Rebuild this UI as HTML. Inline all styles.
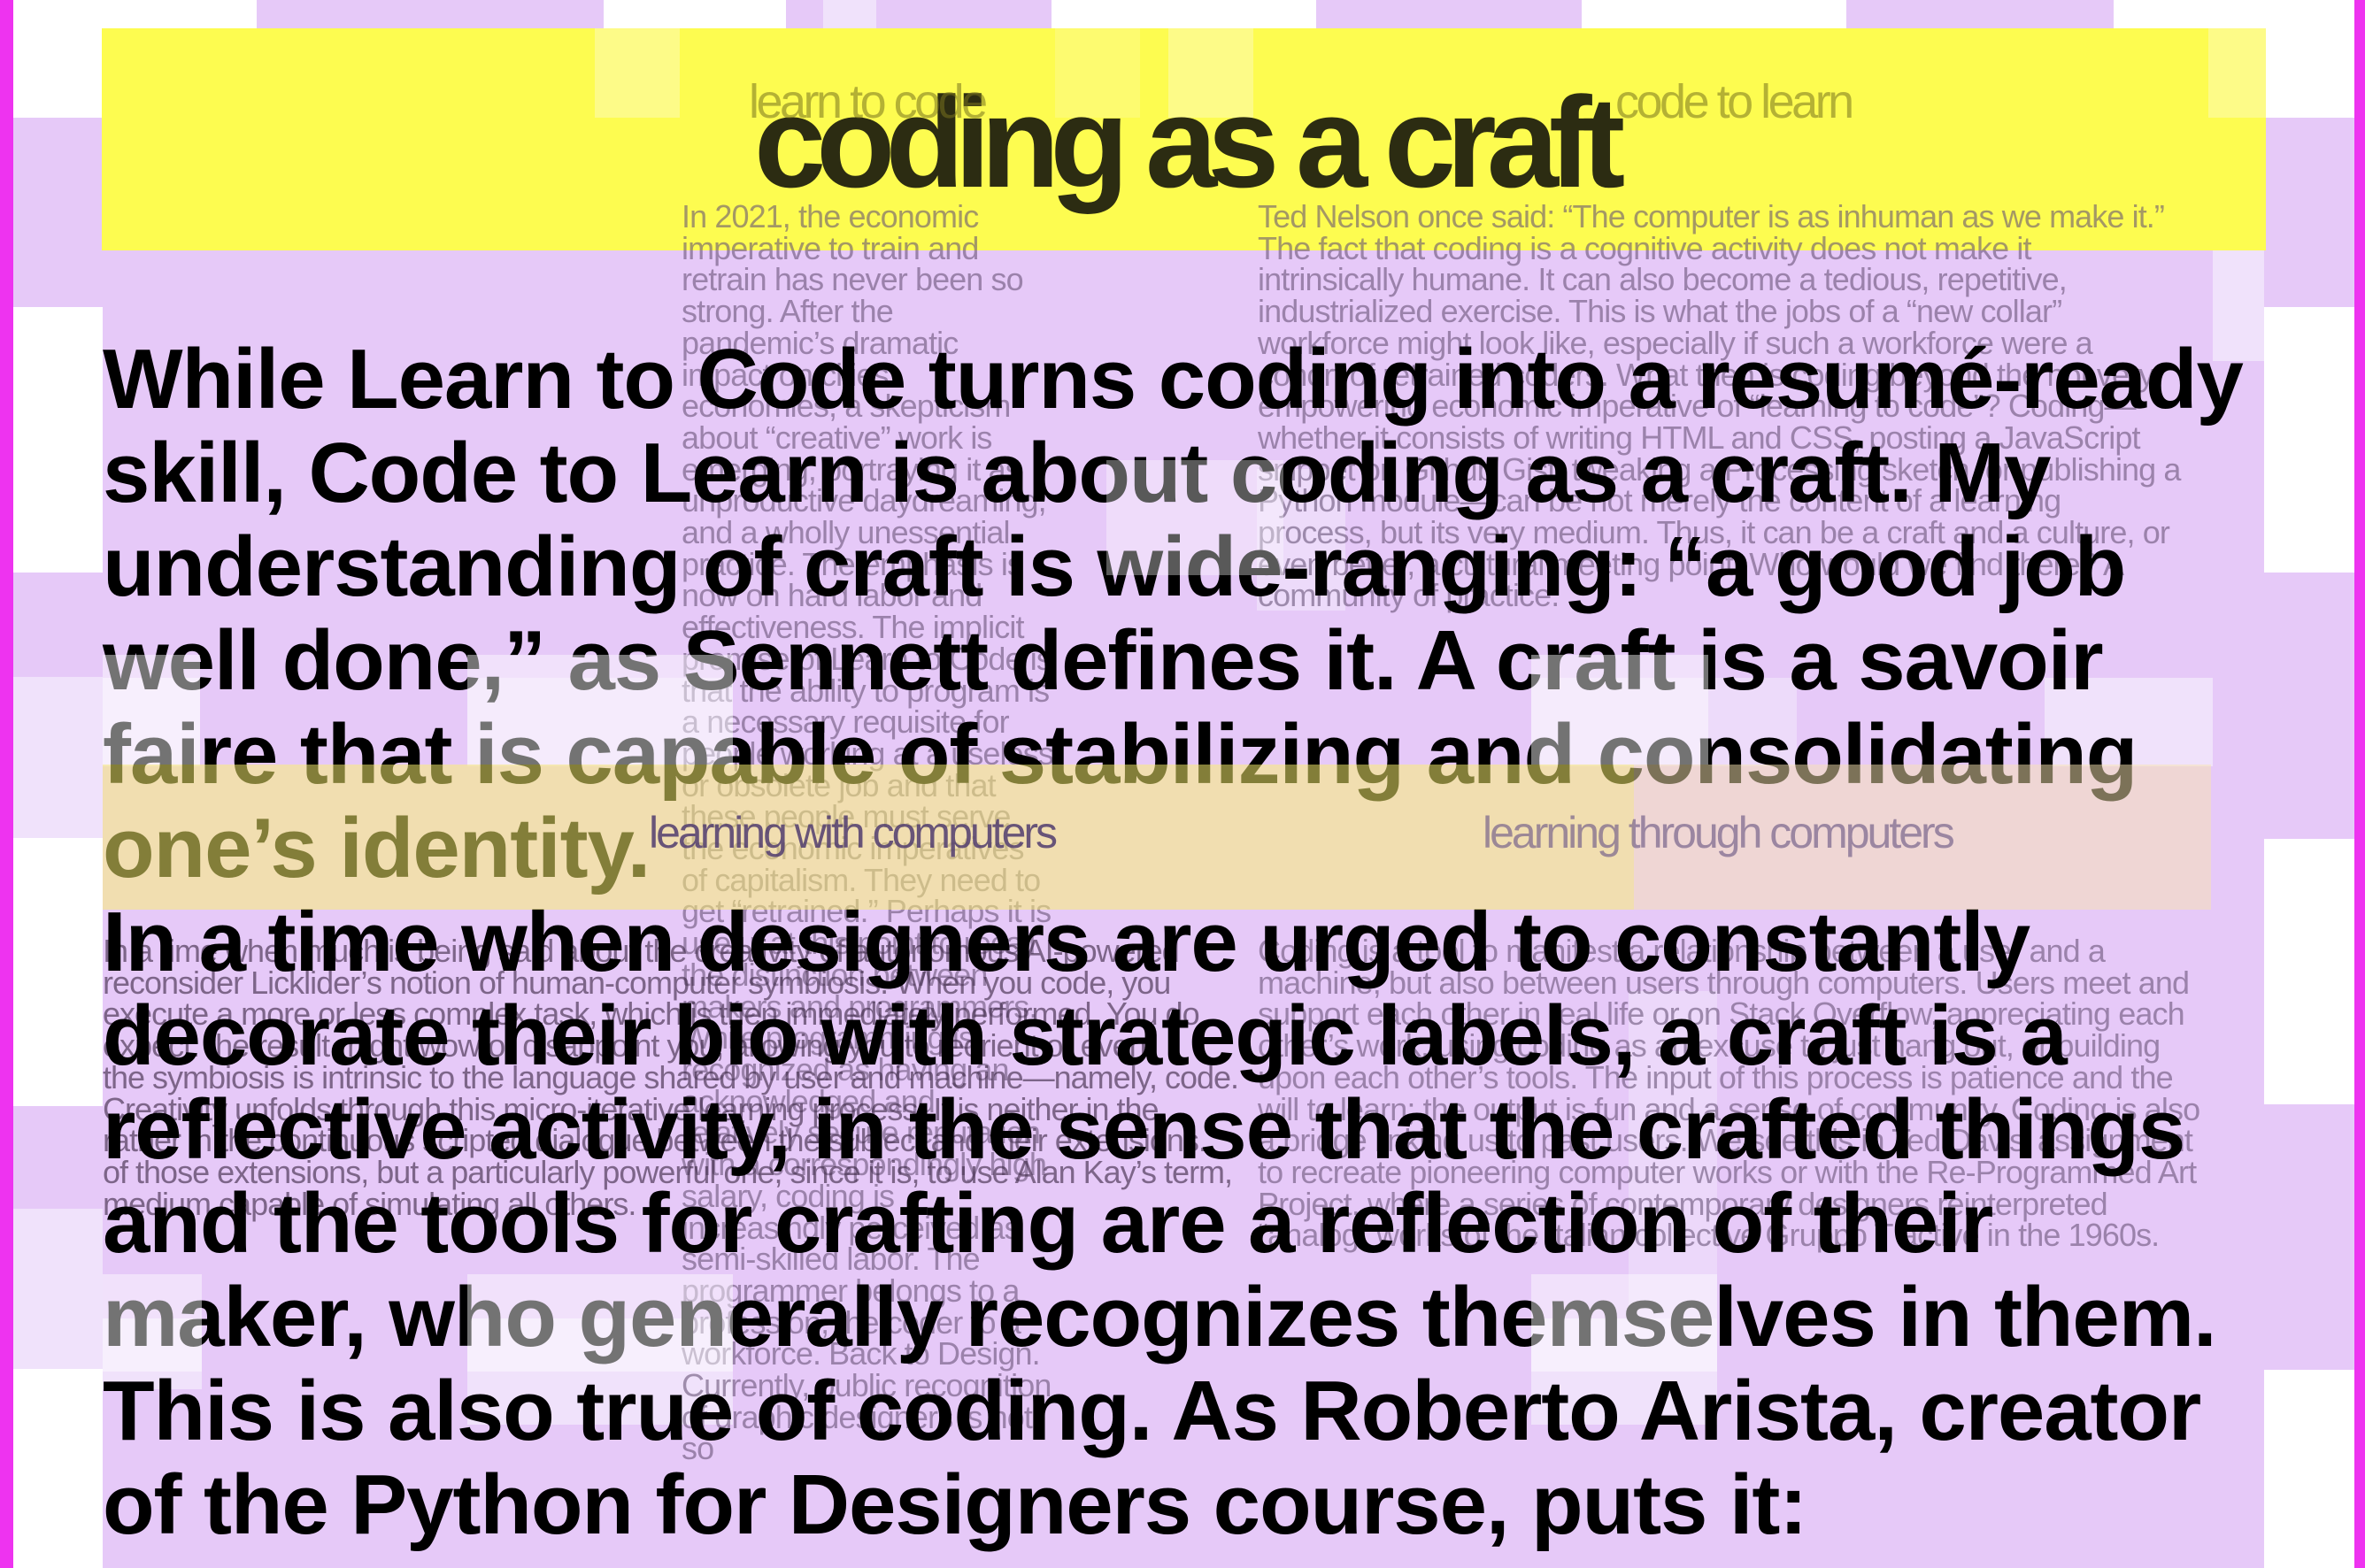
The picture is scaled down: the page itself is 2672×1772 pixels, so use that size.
<!DOCTYPE html>
<html><head><meta charset="utf-8">
<style>
*{margin:0;padding:0;box-sizing:border-box}
html,body{width:2672px;height:1772px;overflow:hidden;background:#fff}
body{position:relative;font-family:"Liberation Sans",Arial,sans-serif}
.r{position:absolute}
.p{background:#e6c9f8}
.l{background:#f0e2fb}
.main{position:absolute;left:116px;top:376px;font-weight:bold;font-size:96px;line-height:106px;color:#000;letter-spacing:-1.1px;white-space:nowrap;z-index:5}
.sm{position:absolute;font-size:36px;line-height:35.7px;color:rgba(100,80,115,.58);z-index:4;letter-spacing:-0.9px}
.smd{position:absolute;font-size:36px;line-height:35.7px;color:rgba(60,40,70,.62);z-index:4;letter-spacing:-1px;white-space:nowrap}
.lab{position:absolute;font-size:54px;letter-spacing:-3.5px;white-space:nowrap;z-index:7}
</style></head><body>
<div class="r" style="left:0;top:0;width:15px;height:1772px;background:#ee33f0;z-index:20"></div>
<div class="r" style="left:2660px;top:0;width:12px;height:1772px;background:#ee33f0;z-index:20"></div>
<div class="r p" style="left:116px;top:32px;width:2442px;height:1740px"></div>
<div class="r p" style="left:290px;top:0;width:392px;height:40px"></div>
<div class="r p" style="left:888px;top:0;width:300px;height:40px"></div>
<div class="r l" style="left:930px;top:0;width:60px;height:40px"></div>
<div class="r p" style="left:1487px;top:0;width:300px;height:40px"></div>
<div class="r p" style="left:2086px;top:0;width:302px;height:40px"></div>
<div class="r p" style="left:15px;top:133px;width:101px;height:214px"></div>
<div class="r p" style="left:15px;top:647px;width:101px;height:118px"></div>
<div class="r l" style="left:15px;top:765px;width:101px;height:182px"></div>
<div class="r p" style="left:15px;top:1250px;width:101px;height:116px"></div>
<div class="r l" style="left:15px;top:1366px;width:101px;height:181px"></div>
<div class="r p" style="left:2558px;top:133px;width:102px;height:214px"></div>
<div class="r p" style="left:2558px;top:647px;width:102px;height:301px"></div>
<div class="r p" style="left:2558px;top:1248px;width:102px;height:300px"></div>
<div class="r l" style="left:2500px;top:268px;width:58px;height:140px"></div>
<div class="r l" style="left:1420px;top:530px;width:100px;height:160px;opacity:.7"></div>
<div class="r l" style="left:116px;top:766px;width:110px;height:100px"></div>
<div class="r l" style="left:528px;top:766px;width:300px;height:100px;opacity:.7"></div>
<div class="r l" style="left:1730px;top:766px;width:300px;height:100px;opacity:.7"></div>
<div class="r l" style="left:2310px;top:766px;width:190px;height:100px"></div>
<div class="r l" style="left:116px;top:1490px;width:112px;height:80px"></div>
<div class="r l" style="left:528px;top:1490px;width:300px;height:120px"></div>
<div class="r l" style="left:1730px;top:1490px;width:210px;height:120px"></div>
<div class="r l" style="left:1840px;top:1120px;width:100px;height:370px;opacity:.6"></div>
<div class="r" style="left:115px;top:32px;width:2445px;height:251px;background:#fdfc50;z-index:1"></div>
<div class="r" style="left:672px;top:32px;width:96px;height:101px;background:#fdfb88;z-index:1"></div>
<div class="r" style="left:1192px;top:32px;width:96px;height:101px;background:#fdfb70;z-index:1"></div>
<div class="r" style="left:1320px;top:32px;width:96px;height:101px;background:#fdfb88;z-index:1"></div>
<div class="r" style="left:2495px;top:32px;width:65px;height:101px;background:#fdfb88;z-index:1"></div>
<div class="r" style="left:852px;top:76px;font-size:146px;font-weight:bold;letter-spacing:-11px;color:#2c2c12;white-space:nowrap;z-index:3;line-height:170px">coding as a craft</div>
<div class="lab" style="left:846px;top:84px;color:rgba(120,115,30,.55)">learn to code</div>
<div class="lab" style="left:1825px;top:84px;color:rgba(120,115,30,.55)">code to learn</div>
<div class="sm" style="left:770px;top:227px;width:420px">In 2021, the economic imperative to train and retrain has never been so strong. After the pandemic’s dramatic impact on cities’ economies, a skepticism about “creative” work is emerging, portraying it as unproductive daydreaming, and a wholly unessential practice. The emphasis is now on hard labor and effectiveness. The implicit promise of Learn to Code is that the ability to program is a necessary requisite for people working at a useless or obsolete job and that these people must serve the economic imperatives of capitalism. They need to get “retrained.” Perhaps it is useful at this point to recall the distinction between makers and programmers. While programming is recognized as having an acknowledged and relatively secure reputation with a correspondingly high salary, coding is increasingly perceived as semi-skilled labor. The programmer belongs to a profession, the coder to a workforce. Back to Design. Currently, public recognition of graphic designers is not so</div>
<div class="sm" style="left:1421px;top:227px;width:1045px">Ted Nelson once said: “The computer is as inhuman as we make it.” The fact that coding is a cognitive activity does not make it intrinsically humane. It can also become a tedious, repetitive, industrialized exercise. This is what the jobs of a “new collar” workforce might look like, especially if such a workforce were a cohort of retrained coders. What then is coding beyond the not very empowering economic imperative of “learning to code”? Coding—whether it consists of writing HTML and CSS, posting a JavaScript snippet on Github Gist, tweaking a Processing sketch, or publishing a Python module—can be not merely the content of a learning process, but its very medium. Thus, it can be a craft and a culture, or even better, a cultural meeting point. Who would we find there? A community of practice.</div>
<div class="smd" style="left:116px;top:1057px">In a time when much is being said about the creativity of autonomous AI-powered<br>reconsider Licklider’s notion of human-computer symbiosis. When you code, you<br>execute a more or less complex task, which is then immediately performed. You do<br>expect: the result might wow or disappoint you, allowing you to reorient or even<br>the symbiosis is intrinsic to the language shared by user and machine—namely, code.<br>Creativity unfolds through this micro-iterative learning process. It is neither in the<br>rather in the continuous scripted dialogue between the subject and their extensions.<br>of those extensions, but a particularly powerful one, since it is, to use Alan Kay’s term,<br>medium capable of simulating all others.</div>
<div class="sm" style="left:1421px;top:1057px;width:1070px">Coding is a tool to manifest a relationship between a user and a machine, but also between users through computers. Users meet and support each other in real life or on Stack Overflow, appreciating each other’s work, using coding as an excuse to just hang out, or building upon each other’s tools. The input of this process is patience and the will to learn; the output is fun and a sense of community. Coding is also a bridge linking us to past users. We see this in Ted Davis’ assignment to recreate pioneering computer works or with the Re-Programmed Art Project, where a series of contemporary designers reinterpreted “analog” works of the Italian collective Gruppo T active in the 1960s.</div>
<div class="main">While Learn to Code turns coding into a resumé-ready<br>skill, Code to Learn is about coding as a craft. My<br>understanding of craft is wide-ranging: “a good job<br>well done,” as Sennett defines it. A craft is a savoir<br>faire that is capable of stabilizing and consolidating<br>one’s identity.<br>In a time when designers are urged to constantly<br>decorate their bio with strategic labels, a craft is a<br>reflective activity, in the sense that the crafted things<br>and the tools for crafting are a reflection of their<br>maker, who generally recognizes themselves in them.<br>This is also true of coding. As Roberto Arista, creator<br>of the Python for Designers course, puts it:</div>
<div class="r" style="left:116px;top:864px;width:1730px;height:164px;background:rgba(252,242,110,.52);z-index:6"></div>
<div class="r" style="left:1846px;top:864px;width:652px;height:164px;background:rgba(248,228,175,.5);z-index:6"></div>
<div class="r" style="left:116px;top:740px;width:110px;height:124px;background:rgba(255,255,255,.45);z-index:6"></div>
<div class="r" style="left:528px;top:740px;width:300px;height:124px;background:rgba(255,255,255,.45);z-index:6"></div>
<div class="r" style="left:1730px;top:740px;width:200px;height:124px;background:rgba(255,255,255,.45);z-index:6"></div>
<div class="r" style="left:116px;top:1440px;width:112px;height:110px;background:rgba(255,255,255,.45);z-index:6"></div>
<div class="r" style="left:528px;top:1440px;width:300px;height:110px;background:rgba(255,255,255,.45);z-index:6"></div>
<div class="r" style="left:1730px;top:1440px;width:210px;height:110px;background:rgba(255,255,255,.45);z-index:6"></div>
<div class="r" style="left:1250px;top:520px;width:200px;height:130px;background:rgba(255,255,255,.35);z-index:6"></div>
<div class="lab" style="left:733px;top:912px;font-size:50px;letter-spacing:-3px;color:rgba(80,60,110,.85)">learning with computers</div>
<div class="lab" style="left:1675px;top:912px;font-size:50px;letter-spacing:-3px;color:rgba(120,100,140,.7)">learning through computers</div>
</body></html>
